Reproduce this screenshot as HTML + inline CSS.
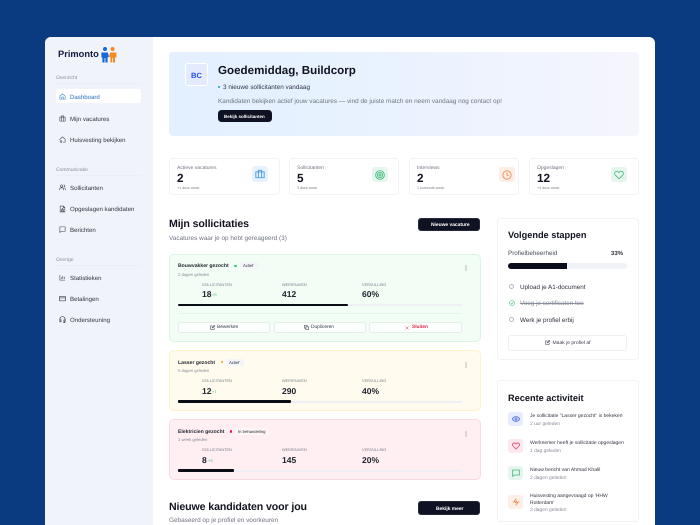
<!DOCTYPE html>
<html lang="nl"><head><meta charset="utf-8"><title>Primonto</title>
<style>
html,body{margin:0;padding:0;width:700px;height:525px;overflow:hidden;background:#0a3a80}
body{font-family:"Liberation Sans",sans-serif;color:#11131f;position:relative;text-rendering:geometricPrecision}
#win{position:absolute;left:45px;top:37px;width:610px;height:488px;background:#fff;border-radius:6px 6px 0 0;overflow:hidden}
#side{position:absolute;left:45px;top:37px;width:108px;height:488px;background:#f1f3fa;border-radius:6px 0 0 0}
#stage{position:absolute;left:0;top:0;width:700px;height:525px;overflow:hidden;filter:blur(.25px)}
.b{position:absolute;box-sizing:border-box}
.t{position:absolute;line-height:0;white-space:nowrap}
.nav{font-size:6.1px;color:#2f3440;margin-top:1.5px}
.cap{font-size:5px;color:#8a8f9c;margin-top:1px}
.card{border:1px solid #f1f3f8;background:#fff;border-radius:4px}
.lab{font-size:5px;color:#6f7482;margin-top:.5px}
.num{font-size:11.8px;font-weight:bold;color:#11131f}
.sub{font-size:3.6px;color:#777c88;margin-top:.5px}
.ic{border-radius:3px}
.h2{font-size:10.6px;font-weight:bold;color:#11131f;letter-spacing:-.01em}
.muted{font-size:6.4px;color:#6f7482;margin-top:1px}
.btn{background:#0f1222;border:1px solid #262a3b;border-radius:3px;color:#fff}
.jt{font-size:5.1px;font-weight:bold;color:#22252f;margin-top:.5px}
.jd{font-size:4.2px;color:#868b97}
.jl{font-size:3.85px;color:#777c88}
.jv{font-size:8.5px;font-weight:bold;color:#22252f}
.track{height:2px;background:#eef0f6;border-radius:1px}
.fill{height:2.4px;background:#0a0c14;border-radius:1px}
.ab{height:11px;border:1px solid #e4efe8;background:#fbfefc;border-radius:2.5px}
.at{font-size:4.8px;color:#3b4150}
.step{font-size:6.3px;color:#2f3440;margin-top:1.5px}
.act{font-size:5px;color:#2f3440;margin-top:1.5px}
.ad{font-size:4.9px;color:#868b97;margin-top:1.5px}
svg{position:absolute;overflow:visible}
svg *{fill:none}
</style></head><body>
<div id="win"></div><div id="side"></div>
<div id="stage">

<!-- logo -->
<div class="t" style="left:58px;top:53.5px;font-size:9.3px;font-weight:bold;color:#141a3c">Primonto</div>
<svg style="left:101px;top:47px" width="16" height="16" viewBox="0 0 16 16">
<circle cx="4" cy="2" r="2" style="fill:#1668d8"/><circle cx="11.6" cy="2" r="2" style="fill:#f58a1f"/>
<path d="M.4 5.5h6.400l1.200 4-1.400 1v5H4.400v-4.500h-.8V15.500H1.400V10.500H.4z" style="fill:#1668d8"/>
<path d="M15.400 5.500H9.200L8 9.500l1.400 1v5h1.800v-4.500h.8v4.500h2V10.500h1.400z" style="fill:#f58a1f"/>
</svg>

<!-- nav -->
<div class="t cap" style="left:56px;top:77px">Overzicht</div>
<div class="b" style="left:56px;top:83px;width:85px;height:1px;background:#eceef5"></div>
<div class="b" style="left:56px;top:89px;width:85px;height:14px;background:#fff;border-radius:2px"></div>
<svg style="left:59px;top:92.5px" width="7" height="7" viewBox="0 0 24 24"><path d="M3 10.500 12 3l9 7.500V21H3zM9 21v-7h6v7" style="stroke:#3a86c8;stroke-width:2"/></svg>
<div class="t nav" style="left:70px;top:96px;color:#2a6fb5">Dashboard</div>

<svg style="left:59px;top:114.500px" width="7" height="7" viewBox="0 0 24 24"><path d="M3 7h18v14H3zM8 7V3h8v4M8 7v14M16 7v14" style="stroke:#3b4150;stroke-width:2"/></svg>
<div class="t nav" style="left:70px;top:118px">Mijn vacatures</div>
<svg style="left:59px;top:135.500px" width="7" height="7" viewBox="0 0 24 24"><path d="M3 11 12 3l9 8v10h-8M3 11v3M7 16a3 3 0 1 1 0 6 3 3 0 0 1 0-6" style="stroke:#3b4150;stroke-width:2"/></svg>
<div class="t nav" style="left:70px;top:139px">Huisvesting bekijken</div>

<div class="t cap" style="left:56px;top:169px">Communicatie</div>
<div class="b" style="left:56px;top:175px;width:85px;height:1px;background:#eceef5"></div>
<svg style="left:59px;top:183.500px" width="7" height="7" viewBox="0 0 24 24"><path d="M9 3a4 4 0 1 1 0 8 4 4 0 0 1 0-8M2 21v-2a6 6 0 0 1 6-6h2a6 6 0 0 1 6 6v2M16 3a4 4 0 0 1 0 8M19 14a5 5 0 0 1 3 5v2" style="stroke:#3b4150;stroke-width:2"/></svg>
<div class="t nav" style="left:70px;top:187px">Sollicitanten</div>
<svg style="left:59px;top:204.500px" width="7" height="8" viewBox="0 0 24 24"><path d="M4 2h11l5 5v15H4zM15 2v5h5M8 18a4 4 0 0 1 8 0v1H8zM12 10a2 2 0 1 1 0 4 2 2 0 0 1 0-4" style="stroke:#3b4150;stroke-width:2"/></svg>
<div class="t nav" style="left:70px;top:208px">Opgeslagen kandidaten</div>
<svg style="left:59px;top:225.500px" width="7" height="7" viewBox="0 0 24 24"><path d="M3 3h18v15H8l-5 4z" style="stroke:#3b4150;stroke-width:2"/></svg>
<div class="t nav" style="left:70px;top:229px">Berichten</div>

<div class="t cap" style="left:56px;top:259px">Overige</div>
<div class="b" style="left:56px;top:265px;width:85px;height:1px;background:#eceef5"></div>
<svg style="left:59px;top:273.500px" width="7" height="7" viewBox="0 0 24 24"><path d="M3 3v18h18M8 17v-6M13 17V6M18 17v-8" style="stroke:#3b4150;stroke-width:2"/></svg>
<div class="t nav" style="left:70px;top:277px">Statistieken</div>
<svg style="left:59px;top:294.500px" width="7" height="7" viewBox="0 0 24 24"><path d="M2 5h20v15H2zM2 10h20" style="stroke:#3b4150;stroke-width:2.400"/></svg>
<div class="t nav" style="left:70px;top:298px">Betalingen</div>
<svg style="left:59px;top:315.500px" width="7" height="7" viewBox="0 0 24 24"><path d="M3 14v-3a9 9 0 0 1 18 0v3M3 13h4v7H3zM17 13h4v7h-4zM21 20c0 2-3 3-7 3" style="stroke:#3b4150;stroke-width:2.400"/></svg>
<div class="t nav" style="left:70px;top:319px">Ondersteuning</div>

<!-- hero -->
<div class="b" style="left:169px;top:52px;width:470px;height:84px;border-radius:4px;background:linear-gradient(90deg,#e3f0ff 0%,#e8f2ff 40%,#f5f5fd 100%)"></div>
<div class="b" style="left:185px;top:63px;width:23px;height:23px;border-radius:3px;background:#e3ebfd;border:1px solid #fff"></div>
<div class="t" style="left:191px;top:75.500px;font-size:7.600px;font-weight:bold;color:#2750e6">BC</div>
<div class="t" style="left:218px;top:70.500px;font-size:11.600px;font-weight:bold;color:#11131f">Goedemiddag, Buildcorp</div>
<div class="b" style="left:218px;top:86px;width:2px;height:2px;background:#1f8fd8;border-radius:1px"></div>
<div class="t" style="left:223px;top:88px;font-size:6.400px;color:#30343f">3 nieuwe sollicitanten vandaag</div>
<div class="t muted" style="left:218px;top:100.500px">Kandidaten bekijken actief jouw vacatures — vind de juiste match en neem vandaag nog contact op!</div>
<div class="b" style="left:218px;top:110px;width:54px;height:12px;border-radius:3.500px;background:#0f1222"></div>
<div class="t" style="left:224px;top:116.500px;font-size:4.500px;font-weight:bold;color:#fff">Bekijk sollicitanten</div>

<!-- stats -->
<div class="b card" style="left:169px;top:158px;width:111px;height:37px"></div>
<div class="b card" style="left:289px;top:158px;width:110px;height:37px"></div>
<div class="b card" style="left:409px;top:158px;width:110px;height:37px"></div>
<div class="b card" style="left:529px;top:158px;width:110px;height:37px"></div>

<div class="t lab" style="left:177px;top:167.500px">Actieve vacatures</div>
<div class="t num" style="left:177px;top:178px">2</div>
<div class="t sub" style="left:177px;top:187px">+1 deze week</div>
<div class="b ic" style="left:252px;top:166px;width:16px;height:16px;background:#e6f2fd"></div>
<svg style="left:255px;top:169px" width="10" height="10" viewBox="0 0 24 24"><path d="M2 7h20v14H2zM8 7V3h8v4M8 7v14M16 7v14" style="stroke:#3d94d6;stroke-width:2"/></svg>

<div class="t lab" style="left:297px;top:167.500px">Sollicitanten</div>
<div class="t num" style="left:297px;top:178px">5</div>
<div class="t sub" style="left:297px;top:187px">3 deze week</div>
<div class="b ic" style="left:372px;top:167px;width:16px;height:15px;background:#e6f6ee"></div>
<svg style="left:375px;top:169.500px" width="10" height="10" viewBox="0 0 24 24"><circle cx="12" cy="12" r="10.500" style="stroke:#3cb878;stroke-width:2"/><circle cx="12" cy="12" r="6.500" style="stroke:#3cb878;stroke-width:2"/><circle cx="12" cy="12" r="2.500" style="stroke:#3cb878;stroke-width:2"/></svg>

<div class="t lab" style="left:417px;top:167.500px">Interviews</div>
<div class="t num" style="left:417px;top:178px">2</div>
<div class="t sub" style="left:417px;top:187px">1 komende week</div>
<div class="b ic" style="left:499px;top:167px;width:16px;height:15px;background:#fdeee6"></div>
<svg style="left:502px;top:169.500px" width="10" height="10" viewBox="0 0 24 24"><circle cx="12" cy="12" r="10" style="stroke:#ee8a4e;stroke-width:2.200"/><path d="M12 6v6l4 2" style="stroke:#ee8a4e;stroke-width:2.200"/></svg>

<div class="t lab" style="left:537px;top:167.500px">Opgeslagen</div>
<div class="t num" style="left:537px;top:178px">12</div>
<div class="t sub" style="left:537px;top:187px">+4 deze week</div>
<div class="b ic" style="left:611px;top:167px;width:16px;height:15px;background:#e6f6ee"></div>
<svg style="left:614px;top:169.500px" width="10" height="10" viewBox="0 0 24 24"><path d="M12 21 3 12a5.500 5.500 0 0 1 0-7.500 5.500 5.500 0 0 1 7.500 0L12 6l1.500-1.500a5.500 5.500 0 0 1 7.500 0 5.500 5.500 0 0 1 0 7.500z" style="stroke:#3cb878;stroke-width:2"/></svg>

<!-- section 1 -->
<div class="t h2" style="left:169px;top:223.500px">Mijn sollicitaties</div>
<div class="t muted" style="left:169px;top:238px">Vacatures waar je op hebt gereageerd (3)</div>
<div class="b btn" style="left:418px;top:217.500px;width:62px;height:13.500px"></div>
<div class="t" style="left:431px;top:226px;font-size:4.900px;font-weight:bold;color:#fff">Nieuwe vacature</div>

<!-- card 1 -->
<div class="b" style="left:169px;top:254px;width:312px;height:88px;background:#f2fdf5;border:1px solid #dcf6e3;border-radius:5px"></div>
<div class="t jt" style="left:178px;top:265.500px">Bouwvakker gezocht</div>
<div class="b" style="left:234px;top:264.500px;width:2.500px;height:2.500px;border-radius:2px;background:#2ecc71"></div>
<div class="b" style="left:240px;top:262px;width:18px;height:7px;background:#f4f4fb;border-radius:2px"></div>
<div class="t" style="left:243px;top:266px;font-size:4.200px;color:#30343f">Actief</div>
<div class="t jd" style="left:178px;top:274.500px">2 dagen geleden</div>
<svg style="left:465px;top:265px" width="2" height="6" viewBox="0 0 2 6"><circle cx="1" cy="1" r=".5" style="fill:#555"/><circle cx="1" cy="3" r=".5" style="fill:#555"/><circle cx="1" cy="5" r=".5" style="fill:#555"/></svg>
<div class="t jl" style="left:202px;top:284.500px">SOLLICITANTEN</div>
<div class="t jl" style="left:282px;top:284.500px">WEERGAVEN</div>
<div class="t jl" style="left:362px;top:284.500px">VERVULLING</div>
<div class="t jv" style="left:202px;top:294px">18</div><div class="t" style="left:212px;top:295px;font-size:4px;color:#4cc77d">+3</div>
<div class="t jv" style="left:282px;top:294px">412</div>
<div class="t jv" style="left:362px;top:294px">60%</div>
<div class="b track" style="left:178px;top:304px;width:284px"></div>
<div class="b fill" style="left:178px;top:303.800px;width:170px"></div>
<div class="b" style="left:178px;top:313px;width:284px;height:1px;background:#e6f5ea"></div>
<div class="b ab" style="left:178px;top:322px;width:92px"></div>
<div class="b ab" style="left:274px;top:322px;width:92px"></div>
<div class="b ab" style="left:369px;top:322px;width:93px"></div>
<svg style="left:210px;top:325px" width="5" height="5" viewBox="0 0 24 24"><path d="M20 13v8H3V4h8M10 14l1-4 9-8 3 3-9 8z" style="stroke:#30343f;stroke-width:2.500"/></svg>
<div class="t at" style="left:217px;top:327.500px">Bewerken</div>
<svg style="left:304px;top:325px" width="5" height="5" viewBox="0 0 24 24"><path d="M9 9h13v13H9zM15 9V2H2v13h7" style="stroke:#30343f;stroke-width:2.500"/></svg>
<div class="t at" style="left:311px;top:327.500px">Dupliceren</div>
<svg style="left:405px;top:325.500px" width="4" height="4" viewBox="0 0 24 24"><path d="M3 3l18 18M21 3 3 21" style="stroke:#e0294a;stroke-width:3"/></svg>
<div class="t at" style="left:412px;top:327.500px;color:#e0294a;font-weight:bold">Sluiten</div>

<!-- card 2 -->
<div class="b" style="left:169px;top:350px;width:312px;height:61px;background:#fffcef;border:1px solid #fdf2c9;border-radius:5px"></div>
<div class="t jt" style="left:178px;top:362px">Lasser gezocht</div>
<div class="b" style="left:220.500px;top:360.500px;width:2.500px;height:2.500px;border-radius:2px;background:#f59e1f"></div>
<div class="b" style="left:226px;top:358.500px;width:18px;height:7px;background:#f4f4fb;border-radius:2px"></div>
<div class="t" style="left:229px;top:362.500px;font-size:4.200px;color:#30343f">Actief</div>
<div class="t jd" style="left:178px;top:371px">5 dagen geleden</div>
<svg style="left:465px;top:361.500px" width="2" height="6" viewBox="0 0 2 6"><circle cx="1" cy="1" r=".5" style="fill:#555"/><circle cx="1" cy="3" r=".5" style="fill:#555"/><circle cx="1" cy="5" r=".5" style="fill:#555"/></svg>
<div class="t jl" style="left:202px;top:381px">SOLLICITANTEN</div>
<div class="t jl" style="left:282px;top:381px">WEERGAVEN</div>
<div class="t jl" style="left:362px;top:381px">VERVULLING</div>
<div class="t jv" style="left:202px;top:390.500px">12</div><div class="t" style="left:212px;top:391.500px;font-size:4px;color:#4cc77d">+1</div>
<div class="t jv" style="left:282px;top:390.500px">290</div>
<div class="t jv" style="left:362px;top:390.500px">40%</div>
<div class="b track" style="left:178px;top:400.500px;width:284px"></div>
<div class="b fill" style="left:178px;top:400.300px;width:113px"></div>

<!-- card 3 -->
<div class="b" style="left:169px;top:419px;width:312px;height:61px;background:#ffeff3;border:1px solid #fcd9e0;border-radius:5px"></div>
<div class="t jt" style="left:178px;top:431px">Elektricien gezocht</div>
<div class="b" style="left:229.500px;top:430px;width:2.500px;height:2.500px;border-radius:2px;background:#e8173f"></div>
<div class="b" style="left:235px;top:427.500px;width:34px;height:7px;background:#fff5f7;border-radius:2px"></div>
<div class="t" style="left:238px;top:431.500px;font-size:4.200px;color:#30343f">In behandeling</div>
<div class="t jd" style="left:178px;top:440px">1 week geleden</div>
<svg style="left:465px;top:430.500px" width="2" height="6" viewBox="0 0 2 6"><circle cx="1" cy="1" r=".5" style="fill:#555"/><circle cx="1" cy="3" r=".5" style="fill:#555"/><circle cx="1" cy="5" r=".5" style="fill:#555"/></svg>
<div class="t jl" style="left:202px;top:450px">SOLLICITANTEN</div>
<div class="t jl" style="left:282px;top:450px">WEERGAVEN</div>
<div class="t jl" style="left:362px;top:450px">VERVULLING</div>
<div class="t jv" style="left:202px;top:459.500px">8</div><div class="t" style="left:208px;top:460.500px;font-size:4px;color:#4cc77d">+3</div>
<div class="t jv" style="left:282px;top:459.500px">145</div>
<div class="t jv" style="left:362px;top:459.500px">20%</div>
<div class="b track" style="left:178px;top:469.500px;width:284px"></div>
<div class="b fill" style="left:178px;top:469.300px;width:56px"></div>

<!-- section 2 -->
<div class="t h2" style="left:169px;top:506.500px">Nieuwe kandidaten voor jou</div>
<div class="t muted" style="left:169px;top:520px">Gebaseerd op je profiel en voorkeuren</div>
<div class="b btn" style="left:418px;top:501px;width:62px;height:13.500px"></div>
<div class="t" style="left:436px;top:509.500px;font-size:4.900px;font-weight:bold;color:#fff">Bekijk meer</div>

<!-- panel 1 -->
<div class="b card" style="left:497px;top:218px;width:142px;height:142px"></div>
<div class="t" style="left:508px;top:234.500px;font-size:9.200px;font-weight:bold;color:#11131f">Volgende stappen</div>
<div class="t" style="left:508px;top:253.500px;font-size:6.300px;color:#4a4f5c">Profielbeheerheid</div>
<div class="t" style="left:611px;top:253.500px;font-size:6px;color:#30343f;font-weight:bold">33%</div>
<div class="b" style="left:508px;top:263px;width:119px;height:6px;background:#f1f2f8;border-radius:3px"></div>
<div class="b" style="left:508px;top:263px;width:59px;height:6px;background:#0b0d1c;border-radius:3px 0 0 3px"></div>
<div class="b" style="left:508.500px;top:283.500px;width:5.500px;height:5.500px;border:1px solid #b5b9c4;border-radius:50%"></div>
<div class="t step" style="left:520px;top:286px">Upload je A1-document</div>
<svg style="left:508.500px;top:299.500px" width="6" height="6" viewBox="0 0 24 24"><circle cx="12" cy="12" r="10" style="stroke:#5ccb8a;stroke-width:2.500"/><path d="M7 12l4 4 7-8" style="stroke:#5ccb8a;stroke-width:2.500"/></svg>
<div class="t step" style="left:520px;top:302px;color:#8a8f9c;text-decoration:line-through">Voeg je certificaten toe</div>
<div class="b" style="left:508.500px;top:316.500px;width:5.500px;height:5.500px;border:1px solid #b5b9c4;border-radius:50%"></div>
<div class="t step" style="left:520px;top:319px">Werk je profiel erbij</div>
<div class="b" style="left:508px;top:335px;width:119px;height:16px;border:1px solid #eef0f6;border-radius:3px"></div>
<svg style="left:545px;top:340px" width="5" height="5" viewBox="0 0 24 24"><path d="M20 13v8H3V4h8M10 14l1-4 9-8 3 3-9 8z" style="stroke:#30343f;stroke-width:2.500"/></svg>
<div class="t at" style="left:552.500px;top:342.800px;font-size:5px">Maak je profiel af</div>

<!-- panel 2 -->
<div class="b card" style="left:497px;top:380px;width:142px;height:142px"></div>
<div class="t" style="left:508px;top:397.500px;font-size:9.200px;font-weight:bold;color:#11131f">Recente activiteit</div>

<div class="b ic" style="left:508px;top:412px;width:15px;height:14px;background:#e8edfd"></div>
<svg style="left:511.500px;top:415px" width="8" height="8" viewBox="0 0 24 24"><path d="M1 12s4-7 11-7 11 7 11 7-4 7-11 7S1 12 1 12z" style="stroke:#4f6fe0;stroke-width:2.500"/><circle cx="12" cy="12" r="3" style="stroke:#4f6fe0;stroke-width:2.500"/></svg>
<div class="t act" style="left:530px;top:414.500px">Je sollicitatie "Lasser gezocht" is bekeken</div>
<div class="t ad" style="left:530px;top:423px">2 uur geleden</div>

<div class="b ic" style="left:508px;top:439px;width:15px;height:14px;background:#fde8ee"></div>
<svg style="left:511.500px;top:442px" width="8" height="8" viewBox="0 0 24 24"><path d="M12 21 3 12a5.500 5.500 0 0 1 0-7.500 5.500 5.500 0 0 1 7.500 0L12 6l1.500-1.500a5.500 5.500 0 0 1 7.500 0 5.500 5.500 0 0 1 0 7.500z" style="stroke:#e84a6a;stroke-width:2.500"/></svg>
<div class="t act" style="left:530px;top:441.500px">Werknemer heeft je sollicitatie opgeslagen</div>
<div class="t ad" style="left:530px;top:450px">1 dag geleden</div>

<div class="b ic" style="left:508px;top:466px;width:15px;height:14px;background:#e6f6ee"></div>
<svg style="left:511.500px;top:469px" width="8" height="8" viewBox="0 0 24 24"><path d="M2 3h20v15H8l-6 4z" style="stroke:#3cb878;stroke-width:2.500"/></svg>
<div class="t act" style="left:530px;top:468.500px">Nieuw bericht van Ahmad Khalil</div>
<div class="t ad" style="left:530px;top:477px">2 dagen geleden</div>

<div class="b ic" style="left:508px;top:495px;width:15px;height:14px;background:#fdeee6"></div>
<svg style="left:511.500px;top:498px" width="8" height="8" viewBox="0 0 24 24"><path d="M13 2 6 11h5l-1 5M11 22l7-9h-5l1-5M2 12h5M17 12h5" style="stroke:#ee8a4e;stroke-width:2.500"/></svg>
<div class="t act" style="left:530px;top:494.500px">Huisvesting aangevraagd op 'HHW</div>
<div class="t act" style="left:530px;top:501.500px">Rotterdam'</div>
<div class="t ad" style="left:530px;top:509.500px">3 dagen geleden</div>

</div>
</body></html>
